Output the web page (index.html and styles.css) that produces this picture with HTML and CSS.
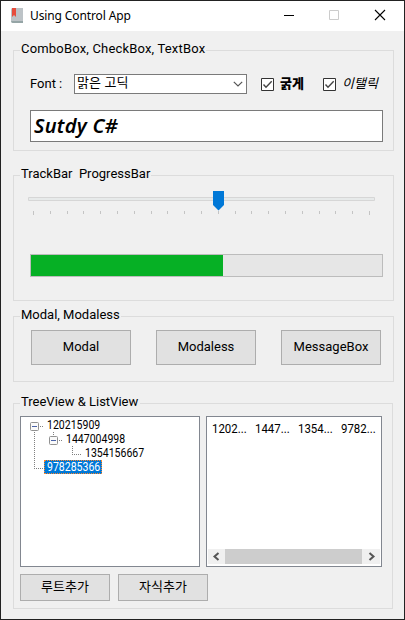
FILE: index.html
```
<!DOCTYPE html>
<html lang="ko">
<head>
<meta charset="utf-8">
<title>Using Control App</title>
<link rel="stylesheet" href="styles.css">
</head>
<body>
<div class="window">
  <header class="titlebar">
    <svg class="app-icon" width="12" height="15" viewBox="0 0 12 15"><path fill="#bdc3c7" d="M0 1.5Q0 0 1.5 0H12V13H0z"/><path fill="#95a5a6" d="M0 13H12V15H1.5Q0 15 0 13z"/><path fill="#e74c3c" d="M1 0H5V9L3 7L1 9z"/></svg>
    <span class="title">Using Control App</span>
    <svg class="caption" width="102" height="12" viewBox="0 0 102 12" fill="none"><path stroke="#000" d="M0 6.5H10"/><path stroke="#ccc" d="M45.500 1.500H54.500V10.500H45.500z"/><path stroke="#000" stroke-width="1.100" d="M91 1L101 11M101 1L91 11"/></svg>
  </header>

  <section class="group group-text">
    <h2 class="legend l1">ComboBox, CheckBox, TextBox</h2>
    <div class="row">
      <label class="font-label">Font :</label>
      <div class="combo"><span>맑은 고딕</span><svg width="10" height="6" viewBox="0 0 10 6" fill="none"><path stroke="#555" stroke-width="1.200" d="M.8.8L5 5L9.200.8"/></svg></div>
      <span class="check"><svg width="13" height="13" viewBox="0 0 13 13"><path fill="#fff" stroke="#333" d="M.5.5H12.500V12.500H.5z"/><path fill="none" stroke="#444" stroke-width="1.400" d="M2.500 6.500L5 9.200L10.700 3.300"/></svg><b>굵게</b></span>
      <span class="check"><svg width="13" height="13" viewBox="0 0 13 13"><path fill="#fff" stroke="#333" d="M.5.5H12.500V12.500H.5z"/><path fill="none" stroke="#444" stroke-width="1.400" d="M2.500 6.500L5 9.200L10.700 3.300"/></svg><i>이탤릭</i></span>
    </div>
    <div class="textbox"><span>Sutdy C#</span></div>
  </section>

  <section class="group group-track">
    <h2 class="legend l2">TrackBar&nbsp; ProgressBar</h2>
    <svg class="track" width="347" height="24" viewBox="0 0 347 24">
      <path fill="#e7eaea" stroke="#d6d6d6" d="M.5 6.500H346.500V9.500H.5z"/>
      <path stroke="#c4c4c4" d="M5.500 20v4M22.500 20v3M39.500 20v3M55.500 20v3M72.500 20v3M89.500 20v3M106.500 20v3M123.500 20v3M139.500 20v3M156.500 20v3M173.500 20v3M190.500 20v3M207.500 20v3M223.500 20v3M240.500 20v3M257.500 20v3M274.500 20v3M291.500 20v3M307.500 20v3M324.500 20v3M341.500 20v4"/>
      <path fill="#0078d7" d="M185 0H196V14L190.500 19.500L185 14z"/>
    </svg>
    <div class="progress"><div class="bar"></div></div>
  </section>

  <section class="group group-modal">
    <h2 class="legend l3">Modal, Modaless</h2>
    <div class="modal-buttons">
      <button>Modal</button><button>Modaless</button><button>MessageBox</button>
    </div>
  </section>

  <section class="group group-views">
    <h2 class="legend l4">TreeView &amp; ListView</h2>
    <div class="views">
      <div class="tree">
        <div class="node"><svg width="14" height="14" viewBox="0 0 14 14"><rect x=".5" y="4.500" width="8" height="8" rx="1" fill="#fafafa" stroke="#919191"/><path stroke="#4b63a7" d="M2 8.500H7"/><path stroke="#808080" stroke-dasharray="1 1" d="M10 8.500H14"/></svg><span class="num">120215909</span></div>
        <div class="node"><svg width="33" height="14" viewBox="0 0 33 14"><rect x="19.500" y="4.500" width="8" height="8" rx="1" fill="#fafafa" stroke="#919191"/><path stroke="#4b63a7" d="M21 8.500H26"/><path stroke="#808080" stroke-dasharray="1 1" d="M29 8.500H33M4.500 0V14M23.500 0V4"/></svg><span class="num">1447004998</span></div>
        <div class="node"><svg width="52" height="14" viewBox="0 0 52 14"><path fill="none" stroke="#808080" stroke-dasharray="1 1" d="M4.500 0V14M42.500 0V8M42 8.500H52"/></svg><span class="num">1354156667</span></div>
        <div class="node"><svg width="14" height="14" viewBox="0 0 14 14"><path fill="none" stroke="#808080" stroke-dasharray="1 1" d="M4.500 0V8M4 8.500H14"/></svg><span class="selected"><span class="num">978285366</span></span></div>
      </div>
      <div class="list">
        <div class="columns"><span>1202...</span><span>1447...</span><span>1354...</span><span>9782...</span></div>
        <div class="scrollbar">
          <svg width="17" height="15" viewBox="0 0 17 15"><path fill="none" stroke="#555" stroke-width="2" d="M10.500 4L6.500 7.500L10.500 11"/></svg>
          <div class="thumb"></div>
          <svg width="18" height="15" viewBox="0 0 18 15"><path fill="none" stroke="#555" stroke-width="2" d="M7.500 4L11.500 7.500L7.500 11"/></svg>
        </div>
      </div>
    </div>
    <div class="add-buttons"><button>루트추가</button><button>자식추가</button></div>
  </section>
</div>
</body>
</html>
```
FILE: styles.css
```
* { box-sizing: border-box; }
body { margin: 0; font: 13px/16px Roboto, "Noto Sans CJK KR", sans-serif; color: #000; }
svg { display: block; flex: none; }
.window { width: 405px; height: 620px; border: 1px solid #222; background: #f0f0f0; overflow: hidden; }
.titlebar { display: flex; align-items: center; height: 30px; padding: 0 18px 0 10px; background: #fff; }
.app-icon { margin-top: -1px; }
.title { margin-left: 7px; font: 12px/16px "Noto Sans", sans-serif; letter-spacing: -.12px; white-space: nowrap; }
.caption { margin-left: auto; margin-top: -2px; }
.group { display: flex; flex-direction: column; align-items: flex-start; width: 381px; margin-left: 12px; border: 1px solid #dcdcdc; }
.legend { height: 16px; margin: -10px 0 1px 6px; padding: 0 1px; background: #f0f0f0; font-size: 13px; font-weight: 400; line-height: 16px; white-space: nowrap; }
.group-text { height: 101px; margin-top: 19px; }
.l1 { width: 186px; letter-spacing: .18px; }
.row { display: flex; align-items: center; height: 20px; margin: 16px 0 0 16px; }
.font-label { width: 44px; font-size: 13px; white-space: nowrap; }
.combo { display: flex; align-items: center; justify-content: space-between; width: 173px; height: 20px; padding: 0 3px 0 2px; border: 1px solid #7a7a7a; background: #fff; font-size: 13px; }
.combo span { margin-top: -2px; letter-spacing: .1px; }
.check { display: flex; align-items: center; gap: 6px; width: 48px; margin-left: 14px; font-size: 13px; white-space: nowrap; }
.check b { font-weight: 900; }
.check b, .check i { margin-top: -1px; }
.textbox { width: 353px; height: 32px; margin: 16px 0 0 16px; padding-left: 3px; border: 1px solid #7a7a7a; background: #fff; font: italic 600 20px/29px "Noto Sans", sans-serif; letter-spacing: .25px; }
.group-track { height: 126px; margin-top: 24px; }
.l2 { width: 131px; }
.track { margin: 8px 0 0 14px; }
.progress { width: 353px; height: 23px; margin: 39px 0 0 16px; border: 1px solid #bcbcbc; background: #e6e6e6; }
.bar { width: 192px; height: 21px; background: #06b025; }
.group-modal { height: 66px; margin-top: 15px; }
.l3 { width: 101px; }
.modal-buttons { display: flex; gap: 25px; margin: 6px 0 0 17px; }
button { width: 100px; height: 35px; padding: 0 0 2px; border: 1px solid #adadad; background: #e1e1e1; color: #000; font: inherit; }
.group-views { width: 380px; height: 206px; margin-top: 21px; }
.l4 { width: 120px; }
.views { display: flex; gap: 6px; margin: 5px 0 0 6px; }
.tree { width: 180px; height: 151px; padding: 1px 0 0 9px; border: 1px solid #828790; background: #fff; }
.node { display: flex; align-items: center; height: 14px; }
.num { display: block; width: 53px; margin-left: 3px; font-size: 13px; line-height: 14px; transform: scaleX(.81); transform-origin: left; }
.selected { width: 58px; height: 14px; border: 1px dotted #ff8728; background: #0078d7; color: #fff; }
.selected .num { margin-left: 2px; line-height: 12px; }
.list { display: flex; flex-direction: column; justify-content: space-between; width: 176px; height: 151px; padding: 4px 1px 2px; border: 1px solid #828790; background: #fff; }
.columns { display: flex; padding-left: 4px; }
.columns span { flex: none; width: 43px; font-size: 13px; transform: scaleX(.88); transform-origin: left; }
.scrollbar { display: flex; height: 15px; background: #f0f0f0; }
.thumb { width: 137px; height: 15px; background: #cdcdcd; }
.add-buttons { display: flex; gap: 8px; margin: 7px 0 0 6px; }
.add-buttons button { width: 90px; height: 27px; font-size: 13px; }
```
